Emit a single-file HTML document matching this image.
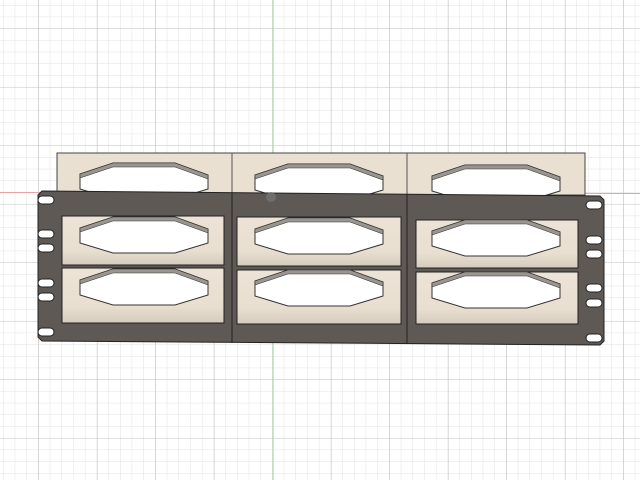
<!DOCTYPE html><html><head><style>html,body{margin:0;padding:0;background:#fff;}svg{display:block}</style></head><body>
<svg width="640" height="480" viewBox="0 0 640 480" xmlns="http://www.w3.org/2000/svg">
<defs>
<pattern id="mn" width="11.7" height="11.7" patternUnits="userSpaceOnUse" x="3" y="5">
<path d="M0 0V11.7M0 0H11.7" stroke="#e2e2e2" stroke-width="1" fill="none"/></pattern>
<pattern id="mj" width="58.5" height="58.5" patternUnits="userSpaceOnUse" x="38.5" y="28.5">
<path d="M0 0V58.5M0 0H58.5" stroke="#c4c4c4" stroke-width="1" fill="none"/></pattern>
<g id="oct"><polygon points="80,228 113,217 175,217 208,229 208,243 175,253 113,253 80,243" fill="#fff" stroke="#333" stroke-width="1"/>
<polygon points="80,228 113,217 175,217 208,229 208,233 175,221 113,221 80,232" fill="#9a958f" stroke="#333" stroke-width="0.6"/></g>
<linearGradient id="tg" x1="0" y1="0" x2="0" y2="1"><stop offset="0" stop-color="#ece3d6"/><stop offset="0.7" stop-color="#e9dfd0"/><stop offset="1" stop-color="#d6ccbd"/></linearGradient>
</defs>
<rect width="640" height="480" fill="url(#mn)"/>
<rect width="640" height="480" fill="url(#mj)"/>
<line x1="273" y1="0" x2="273" y2="480" stroke="#9fd49f" stroke-width="1"/>
<line x1="0" y1="192.5" x2="640" y2="193.5" stroke="#e8a0a0" stroke-width="1"/>
<rect x="57" y="153" width="528" height="42" fill="#eae0d2" stroke="#444" stroke-width="1"/>
<line x1="232" y1="153" x2="232" y2="195" stroke="#555"/>
<line x1="407" y1="153" x2="407" y2="195" stroke="#555"/>
<use href="#oct" transform="translate(0,-54)"/>
<use href="#oct" transform="translate(175,-53)"/>
<use href="#oct" transform="translate(352,-52)"/>
<polygon points="42,191 600,196 604,200 604,341 600,345 42,341 38,337 38,195" fill="#5f5955" stroke="#222" stroke-width="1"/>
<line x1="232" y1="193" x2="232" y2="343" stroke="#222"/>
<line x1="407" y1="194" x2="407" y2="344" stroke="#222"/>
<g stroke="#222" stroke-width="1" fill="url(#tg)">
<rect x="62" y="216" width="162" height="49"/>
<rect x="62" y="268" width="162" height="55"/>
<rect x="237" y="217" width="164" height="49"/>
<rect x="237" y="270" width="164" height="54"/>
<rect x="416" y="220" width="162" height="48"/>
<rect x="416" y="272" width="162" height="52"/>
</g>
<use href="#oct"/>
<use href="#oct" transform="translate(0,52)"/>
<use href="#oct" transform="translate(175,1)"/>
<use href="#oct" transform="translate(175,53)"/>
<use href="#oct" transform="translate(352,3)"/>
<use href="#oct" transform="translate(352,55)"/>
<g fill="#fff" stroke="#222" stroke-width="1">
<rect x="38" y="196" width="16" height="8" rx="4"/>
<rect x="38" y="230" width="16" height="8" rx="4"/>
<rect x="38" y="244" width="16" height="8" rx="4"/>
<rect x="38" y="279" width="16" height="8" rx="4"/>
<rect x="38" y="293" width="16" height="8" rx="4"/>
<rect x="38" y="328" width="16" height="8" rx="4"/>
<rect x="586" y="201" width="16" height="8" rx="4"/>
<rect x="586" y="236" width="16" height="8" rx="4"/>
<rect x="586" y="250" width="16" height="8" rx="4"/>
<rect x="586" y="284" width="16" height="8" rx="4"/>
<rect x="586" y="299" width="16" height="8" rx="4"/>
<rect x="586" y="334" width="16" height="8" rx="4"/>
</g>
<circle cx="271" cy="197" r="5" fill="#777" opacity="0.7"/>
</svg>
</body></html>
